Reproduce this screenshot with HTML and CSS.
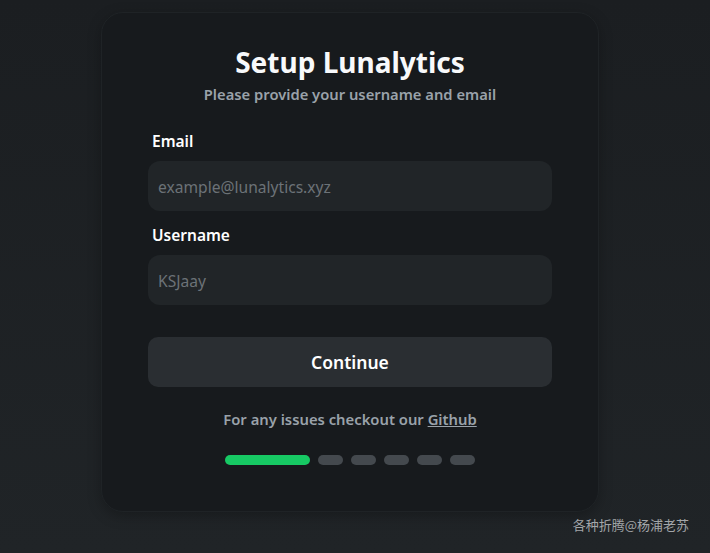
FILE: index.html
```html
<!DOCTYPE html>
<html lang="en">
<head>
<meta charset="utf-8">
<title>Setup Lunalytics</title>
<link rel="stylesheet" href="styles.css">
</head>
<body>
<main class="page">
  <section class="card">
    <h1 class="title">Setup Lunalytics</h1>
    <p class="subtitle">Please provide your username and email</p>
    <form class="form">
      <label class="field">
        <span class="label">Email</span>
        <input class="input" type="text" placeholder="example@lunalytics.xyz">
      </label>
      <label class="field">
        <span class="label">Username</span>
        <input class="input" type="text" placeholder="KSJaay">
      </label>
      <button class="button" type="button">Continue</button>
    </form>
    <p class="help">For any issues checkout our <a class="link" href="#">Github</a></p>
    <div class="steps">
      <span class="step step-active"></span>
      <span class="step"></span>
      <span class="step"></span>
      <span class="step"></span>
      <span class="step"></span>
      <span class="step"></span>
    </div>
  </section>
</main>
<div class="watermark">各种折腾@杨浦老苏</div>
</body>
</html>
```
FILE: styles.css
```css
* { box-sizing: border-box; }
html, body { margin: 0; height: 100%; }
body {
  background: linear-gradient(180deg, #1b1e21 0%, #202427 100%);
  font-family: "Noto Sans", "Open Sans", sans-serif;
  color: #fff;
  overflow: hidden;
}
.page {
  display: flex;
  padding: 12px 0 0 101px;
}
.card {
  width: 498px;
  height: 500px;
  background: #171a1d;
  border: 1px solid #1f2326;
  border-radius: 22px;
  box-shadow: 0 4px 14px rgba(0,0,0,0.25);
  padding: 30px 46px 0;
  display: flex;
  flex-direction: column;
  align-items: center;
}
.title {
  margin: 0;
  font-size: 28px;
  font-weight: 700;
  line-height: 38px;
  color: #f8f9fb;
}
.subtitle {
  margin: 2px 0 0;
  font-size: 14.75px;
  line-height: 22px;
  color: #9aa2aa;
  font-weight: 600;
}
.form {
  width: 100%;
  display: flex;
  flex-direction: column;
  margin-top: 26px;
}
.field {
  display: flex;
  flex-direction: column;
}
.field + .field { margin-top: 14px; }
.label {
  font-size: 15.5px;
  font-weight: 600;
  line-height: 20px;
  padding-left: 4px;
  margin-bottom: 10px;
  color: #fff;
}
.input {
  height: 50px;
  border: none;
  border-radius: 12px;
  background: #212528;
  padding: 2px 10px 0;
  font-family: inherit;
  font-size: 15.6px;
  color: #fff;
  outline: none;
}
.input::placeholder { color: #6c7277; }
.button {
  margin-top: 32px;
  height: 50px;
  border: none;
  border-radius: 10px;
  background: #2a2e32;
  color: #fff;
  font-family: inherit;
  font-size: 17.5px;
  font-weight: 600;
}
.help {
  margin: 21px 0 0;
  font-size: 14.8px;
  line-height: 22px;
  color: #9aa2aa;
  font-weight: 600;
}
.link {
  color: #9aa2aa;
  text-decoration: underline;
}
.steps {
  display: flex;
  gap: 8px;
  margin-top: 25px;
}
.step {
  width: 25px;
  height: 10px;
  border-radius: 5px;
  background: #44494e;
}
.step-active {
  width: 85px;
  background: #17c964;
}
.watermark {
  position: absolute;
  right: 21px;
  bottom: 19px;
  font-family: "Noto Sans CJK SC", sans-serif;
  font-size: 13px;
  color: #a3a6a9;
}
```
